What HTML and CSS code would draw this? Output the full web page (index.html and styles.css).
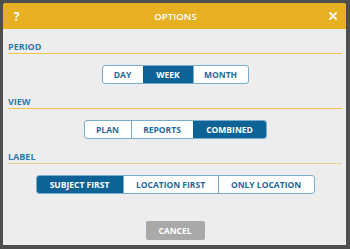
FILE: index.html
```html
<!DOCTYPE html>
<html>
<head>
<meta charset="utf-8">
<link rel="stylesheet" href="styles.css">
</head>
<body>
<div class="dialog">
  <div class="header">
    <span class="help">?</span>
    <span class="title">OPTIONS</span>
    <span class="close"><svg width="8" height="8" viewBox="0 0 8 8"><path d="M1 1 L7 7 M7 1 L1 7" stroke="#ffffff" stroke-width="1.8" stroke-linecap="square"/></svg></span>
  </div>
  <div class="content">
    <div class="section">
      <div class="label">PERIOD</div>
      <div class="group">
        <span class="btn w-day">DAY</span>
        <span class="btn active w-week">WEEK</span>
        <span class="btn w-month">MONTH</span>
      </div>
    </div>
    <div class="section">
      <div class="label">VIEW</div>
      <div class="group">
        <span class="btn w-plan">PLAN</span>
        <span class="btn w-reports">REPORTS</span>
        <span class="btn active w-combined">COMBINED</span>
      </div>
    </div>
    <div class="section">
      <div class="label label-last">LABEL</div>
      <div class="group">
        <span class="btn active w-subject">SUBJECT FIRST</span>
        <span class="btn w-location">LOCATION FIRST</span>
        <span class="btn w-only">ONLY LOCATION</span>
      </div>
    </div>
    <div class="footer">
      <span class="cancel">CANCEL</span>
    </div>
  </div>
</div>
</body>
</html>
```

FILE: styles.css
```css
html, body {
  margin: 0;
  padding: 0;
}
body {
  background: #4e4e4e;
  width: 350px;
  height: 249px;
  padding: 3px 4px 4px 3px;
  box-sizing: border-box;
  font-family: "Open Sans", "DejaVu Sans", sans-serif;
  overflow: hidden;
}
.dialog {
  width: 343px;
  height: 242px;
  background: #ededed;
  border-radius: 3px 3px 0 0;
  overflow: hidden;
  display: flex;
  flex-direction: column;
}
.header {
  height: 26px;
  background: #e7b022;
  display: flex;
  align-items: center;
  justify-content: space-between;
  padding: 0 9px 0 11px;
  color: #ffffff;
  font-weight: 700;
}
.help {
  font-size: 11.5px;
  width: 14px;
}
.title {
  font-size: 9.5px;
  font-weight: 600;
  letter-spacing: 0.1px;
}
.close {
  width: 14px;
  display: flex;
  justify-content: flex-end;
}
.close svg {
  display: block;
}
.content {
  padding: 12px 4px 0 5px;
  display: flex;
  flex-direction: column;
  flex: 1;
}
.section {
  display: flex;
  flex-direction: column;
  margin-bottom: 12px;
}
.label {
  font-size: 9px;
  font-weight: 700;
  color: #2c7cb1;
  line-height: 12px;
  height: 12px;
  border-bottom: 1px solid #f0c24e;
}
.label-last {
  border-bottom-color: #e7cf94;
}
.group {
  align-self: center;
  display: flex;
  margin-top: 11px;
  border: 1px solid #7aaccb;
  border-radius: 3px;
  overflow: hidden;
  background: #ffffff;
}
.btn {
  height: 17px;
  line-height: 17px;
  font-size: 8.5px;
  font-weight: 700;
  color: #1f6a99;
  text-align: center;
  border-left: 1px solid #7aaccb;
  box-sizing: border-box;
}
.btn:first-child {
  border-left: none;
}
.btn.active {
  background: #0d6395;
  color: #ffffff;
  border-left-color: #0d6395;
}
.w-day { width: 40px; }
.w-week { width: 50px; }
.w-month { width: 55px; }
.w-plan { width: 46px; }
.w-reports { width: 62px; }
.w-combined { width: 73px; }
.w-subject { width: 86px; }
.w-location { width: 95px; }
.w-only { width: 96px; }
.footer {
  display: flex;
  justify-content: center;
  margin-top: 15px;
}
.cancel {
  width: 59px;
  height: 19px;
  line-height: 19px;
  background: #a9a9a9;
  border-radius: 2px;
  color: #ffffff;
  font-size: 8.5px;
  font-weight: 700;
  text-align: center;
}
```
